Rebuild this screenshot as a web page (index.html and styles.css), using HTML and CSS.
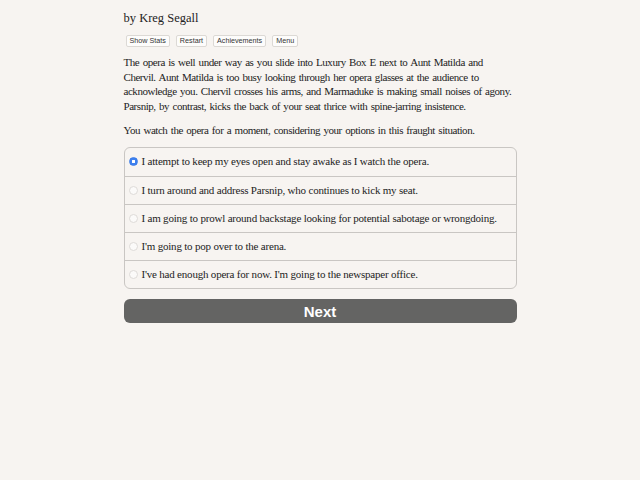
FILE: index.html
```html
<!DOCTYPE html>
<html lang="en">
<head>
    <meta charset="UTF-8">
    <meta name="viewport" content="width=device-width, initial-scale=1.0">
    <title>Choice</title>
    <link rel="stylesheet" href="styles.css">
</head>
<body>
    <div class="container">
        <div class="header">
            <p class="author">by Kreg Segall</p>
            <div class="buttons">
                <button class="small-btn">Show Stats</button>
                <button class="small-btn">Restart</button>
                <button class="small-btn">Achievements</button>
                <button class="small-btn">Menu</button>
            </div>
        </div>
        <div class="story">
            <p>The opera is well under way as you slide into Luxury Box E next to Aunt Matilda and Chervil. Aunt Matilda is too busy looking through her opera glasses at the audience to acknowledge you. Chervil crosses his arms, and Marmaduke is making small noises of agony. Parsnip, by contrast, kicks the back of your seat thrice with spine-jarring insistence.</p>
            <p>You watch the opera for a moment, considering your options in this fraught situation.</p>
        </div>
        <form class="choices">
            <label class="choice"><input type="radio" name="choice" checked> I attempt to keep my eyes open and stay awake as I watch the opera.</label>
            <label class="choice"><input type="radio" name="choice"> I turn around and address Parsnip, who continues to kick my seat.</label>
            <label class="choice"><input type="radio" name="choice"> I am going to prowl around backstage looking for potential sabotage or wrongdoing.</label>
            <label class="choice"><input type="radio" name="choice"> I'm going to pop over to the arena.</label>
            <label class="choice"><input type="radio" name="choice"> I've had enough opera for now. I'm going to the newspaper office.</label>
        </form>
        <button class="next">Next</button>
    </div>
</body>
</html>
```

FILE: styles.css
```css
body{
    margin: 0;
    background-color: #f7f4f1;
    color: #232323;
    font-family: "Liberation Serif", serif;
}
.container{
    width: 393px;
    margin: 0 auto;
    padding-top: 10px;
}
.author{
    margin: 0;
    font-size: 12.5px;
    line-height: 17px;
}
.buttons{
    display: flex;
    gap: 6px;
    padding-left: 2px;
    margin-top: 8px;
}
.small-btn{
    font-family: "Liberation Sans", sans-serif;
    font-size: 7.2px;
    color: #333;
    background-color: #fdfcfb;
    border: 1px solid #dcd9d5;
    border-radius: 2px;
    padding: 1px 3px;
    height: 12px;
    line-height: 8px;
}
.story{
    margin-top: 8px;
    font-size: 11px;
    line-height: 14.5px;
    letter-spacing: -0.45px;
    word-spacing: 1.1px;
}
.story p{
    margin: 0 0 9.5px 0;
}
.choices{
    margin-top: 10px;
    border: 1px solid #c9c6c3;
    border-radius: 6px;
    overflow: hidden;
}
.choice{
    display: flex;
    align-items: center;
    height: 28px;
    padding: 0 0 2px 4px;
    font-size: 11px;
    letter-spacing: -0.2px;
    border-top: 1px solid #c9c6c3;
    box-sizing: border-box;
}
.choice:first-child{
    border-top: none;
}
/* flat radios: faint ring, blue dot when picked */
.choice input{
    appearance: none;
    width: 9px;
    height: 9px;
    margin: 1px 4px 0 0;
    border: 1px solid #dedbd8;
    border-radius: 50%;
    background-color: #fbfaf9;
    box-sizing: border-box;
}
.choice input:checked{
    border-color: #3a7be8;
    background: radial-gradient(circle, #fff 0 1.4px, #3d80ef 1.9px);
}
.next{
    display: block;
    width: 100%;
    height: 24px;
    margin-top: 10px;
    border: none;
    border-radius: 6px;
    background-color: #646463;
    color: #fff;
    font-family: "Liberation Sans", sans-serif;
    font-weight: bold;
    font-size: 15px;
}
```
